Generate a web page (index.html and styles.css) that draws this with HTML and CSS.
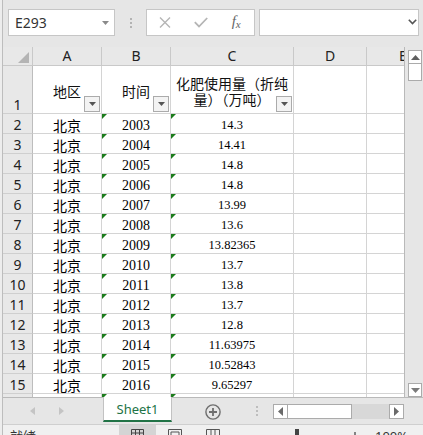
FILE: index.html
```html
<!DOCTYPE html>
<html>
<head>
    <title>Sheet1 - Excel</title>
    <link rel="stylesheet" href="styles.css">
</head>
<body>
    <div class="window">
        <div class="edge"></div>
        <div class="main">
            <div class="formula-bar">
                <div class="name-box">
                    <span>E293</span>
                    <svg width="7" height="4" viewBox="0 0 7 4"><path d="M0 0H7L3.5 4Z" fill="#8a8a8a"/></svg>
                </div>
                <div class="grip">
                    <svg width="2" height="10" viewBox="0 0 2 10"><rect y="0" width="2" height="2" fill="#b3b3b3"/><rect y="4" width="2" height="2" fill="#b3b3b3"/><rect y="8" width="2" height="2" fill="#b3b3b3"/></svg>
                </div>
                <div class="fx-buttons">
                    <span class="fx-btn">
                        <svg width="12" height="11" viewBox="0 0 12 11"><path d="M1 0.5L11 10.5M11 0.5L1 10.5" stroke="#b5b5b5" stroke-width="1.4" fill="none"/></svg>
                    </span>
                    <span class="fx-btn">
                        <svg width="14" height="11" viewBox="0 0 14 11"><path d="M0.8 5.2L5 9.5L13.2 1" stroke="#b5b5b5" stroke-width="1.8" fill="none"/></svg>
                    </span>
                    <span class="fx-btn fx"><i>f</i><i class="sub">x</i></span>
                </div>
                <div class="formula-input">
                    <svg width="9" height="6" viewBox="0 0 9 6"><path d="M0.8 0.8L4.5 4.6L8.2 0.8" stroke="#555" stroke-width="1.6" fill="none"/></svg>
                </div>
            </div>

            <div class="sheet-area">
                <div class="grid">
                    <div class="row head-row">
                        <div class="corner"><svg width="11" height="11" viewBox="0 0 11 11"><path d="M11 0V11H0Z" fill="#b4b4b4"/></svg></div>
                        <div class="col-head">A</div>
                        <div class="col-head">B</div>
                        <div class="col-head">C</div>
                        <div class="col-head">D</div>
                        <div class="col-head">E</div>
                    </div>
                    <div class="row title-row">
                        <div class="row-head">1</div>
                        <div class="cell title">地区<span class="filter"><svg width="7" height="4" viewBox="0 0 7 4"><path d="M0 0H7L3.5 4Z" fill="#555"/></svg></span></div>
                        <div class="cell title">时间<span class="filter"><svg width="7" height="4" viewBox="0 0 7 4"><path d="M0 0H7L3.5 4Z" fill="#555"/></svg></span></div>
                        <div class="cell title">化肥使用量（折纯<br>量）（万吨）<span class="filter"><svg width="7" height="4" viewBox="0 0 7 4"><path d="M0 0H7L3.5 4Z" fill="#555"/></svg></span></div>
                        <div class="cell"></div>
                        <div class="cell"></div>
                    </div>
                    <div class="row">
                        <div class="row-head">2</div>
                        <div class="cell cjk">北京</div>
                        <div class="cell num flag">2003</div>
                        <div class="cell num small flag">14.3</div>
                        <div class="cell"></div>
                        <div class="cell"></div>
                    </div>
                    <div class="row">
                        <div class="row-head">3</div>
                        <div class="cell cjk">北京</div>
                        <div class="cell num flag">2004</div>
                        <div class="cell num small flag">14.41</div>
                        <div class="cell"></div>
                        <div class="cell"></div>
                    </div>
                    <div class="row">
                        <div class="row-head">4</div>
                        <div class="cell cjk">北京</div>
                        <div class="cell num flag">2005</div>
                        <div class="cell num small flag">14.8</div>
                        <div class="cell"></div>
                        <div class="cell"></div>
                    </div>
                    <div class="row">
                        <div class="row-head">5</div>
                        <div class="cell cjk">北京</div>
                        <div class="cell num flag">2006</div>
                        <div class="cell num small flag">14.8</div>
                        <div class="cell"></div>
                        <div class="cell"></div>
                    </div>
                    <div class="row">
                        <div class="row-head">6</div>
                        <div class="cell cjk">北京</div>
                        <div class="cell num flag">2007</div>
                        <div class="cell num small flag">13.99</div>
                        <div class="cell"></div>
                        <div class="cell"></div>
                    </div>
                    <div class="row">
                        <div class="row-head">7</div>
                        <div class="cell cjk">北京</div>
                        <div class="cell num flag">2008</div>
                        <div class="cell num small flag">13.6</div>
                        <div class="cell"></div>
                        <div class="cell"></div>
                    </div>
                    <div class="row">
                        <div class="row-head">8</div>
                        <div class="cell cjk">北京</div>
                        <div class="cell num flag">2009</div>
                        <div class="cell num small flag">13.82365</div>
                        <div class="cell"></div>
                        <div class="cell"></div>
                    </div>
                    <div class="row">
                        <div class="row-head">9</div>
                        <div class="cell cjk">北京</div>
                        <div class="cell num flag">2010</div>
                        <div class="cell num small flag">13.7</div>
                        <div class="cell"></div>
                        <div class="cell"></div>
                    </div>
                    <div class="row">
                        <div class="row-head">10</div>
                        <div class="cell cjk">北京</div>
                        <div class="cell num flag">2011</div>
                        <div class="cell num small flag">13.8</div>
                        <div class="cell"></div>
                        <div class="cell"></div>
                    </div>
                    <div class="row">
                        <div class="row-head">11</div>
                        <div class="cell cjk">北京</div>
                        <div class="cell num flag">2012</div>
                        <div class="cell num small flag">13.7</div>
                        <div class="cell"></div>
                        <div class="cell"></div>
                    </div>
                    <div class="row">
                        <div class="row-head">12</div>
                        <div class="cell cjk">北京</div>
                        <div class="cell num flag">2013</div>
                        <div class="cell num small flag">12.8</div>
                        <div class="cell"></div>
                        <div class="cell"></div>
                    </div>
                    <div class="row">
                        <div class="row-head">13</div>
                        <div class="cell cjk">北京</div>
                        <div class="cell num flag">2014</div>
                        <div class="cell num small flag">11.63975</div>
                        <div class="cell"></div>
                        <div class="cell"></div>
                    </div>
                    <div class="row">
                        <div class="row-head">14</div>
                        <div class="cell cjk">北京</div>
                        <div class="cell num flag">2015</div>
                        <div class="cell num small flag">10.52843</div>
                        <div class="cell"></div>
                        <div class="cell"></div>
                    </div>
                    <div class="row">
                        <div class="row-head">15</div>
                        <div class="cell cjk">北京</div>
                        <div class="cell num flag">2016</div>
                        <div class="cell num small flag">9.65297</div>
                        <div class="cell"></div>
                        <div class="cell"></div>
                    </div>
                    <div class="row">
                        <div class="row-head"></div>
                        <div class="cell"></div>
                        <div class="cell flag"></div>
                        <div class="cell flag"></div>
                        <div class="cell"></div>
                        <div class="cell"></div>
                    </div>
                </div>

                <div class="vscroll">
                    <div class="sbtn">
                        <svg width="9" height="5" viewBox="0 0 9 5"><path d="M0 5H9L4.5 0Z" fill="#5f5f5f"/></svg>
                    </div>
                    <div class="vthumb"></div>
                    <div class="vtrack"></div>
                    <div class="sbtn">
                        <svg width="9" height="5" viewBox="0 0 9 5"><path d="M0 0H9L4.5 5Z" fill="#7a7a7a"/></svg>
                    </div>
                </div>
            </div>

            <div class="tab-bar">
                <div class="tab-nav">
                    <svg width="5" height="8" viewBox="0 0 5 8"><path d="M5 0V8L0 4Z" fill="#c4c4c4"/></svg>
                    <svg width="5" height="8" viewBox="0 0 5 8"><path d="M0 0V8L5 4Z" fill="#c4c4c4"/></svg>
                </div>
                <div class="sheet-tab">Sheet1</div>
                <div class="tab-add">
                    <svg width="16" height="16" viewBox="0 0 16 16"><circle cx="8" cy="8" r="7.1" stroke="#6e6e6e" stroke-width="1.4" fill="none"/><path d="M4 8H12M8 4V12" stroke="#6e6e6e" stroke-width="1.8"/></svg>
                </div>
                <div class="tab-grip">
                    <svg width="2" height="10" viewBox="0 0 2 10"><rect y="0" width="2" height="2" fill="#bdbdbd"/><rect y="4" width="2" height="2" fill="#bdbdbd"/><rect y="8" width="2" height="2" fill="#bdbdbd"/></svg>
                </div>
                <div class="hscroll">
                    <div class="hbtn">
                        <svg width="5" height="9" viewBox="0 0 5 9"><path d="M5 0V9L0 4.5Z" fill="#6a6a6a"/></svg>
                    </div>
                    <div class="hthumb"></div>
                    <div class="htrack"></div>
                    <div class="hbtn">
                        <svg width="5" height="9" viewBox="0 0 5 9"><path d="M0 0V9L5 4.5Z" fill="#6a6a6a"/></svg>
                    </div>
                </div>
            </div>

            <div class="status-bar">
                <div class="status-text">就绪</div>
                <div class="views">
                    <div class="view active">
                        <svg width="13" height="12" viewBox="0 0 13 12"><path d="M0.5 0.5H12.5V11.5H0.5ZM0.5 4H12.5M0.5 8H12.5M4.5 0.5V11.5M8.5 0.5V11.5" stroke="#444" fill="none"/></svg>
                    </div>
                    <div class="view">
                        <svg width="14" height="12" viewBox="0 0 14 12"><path d="M0.5 0.5H13.5V11.5H0.5ZM3 3H11V11.5H3Z" stroke="#555" fill="none"/></svg>
                    </div>
                    <div class="view">
                        <svg width="14" height="12" viewBox="0 0 14 12"><path d="M0.5 0.5H13.5V11.5H0.5ZM5 0.5V11.5M9 0.5V11.5" stroke="#555" fill="none"/></svg>
                    </div>
                </div>
                <svg class="zoom-slider" width="120" height="20" viewBox="0 0 120 20"><path d="M2 12H10M14 12H108" stroke="#777" stroke-width="1"/><rect x="55" y="4" width="4" height="16" fill="#444"/><path d="M111 12H119M115 7V17" stroke="#555" stroke-width="1.4"/></svg>
                <div class="zoom-value">100%</div>
            </div>
        </div>
    </div>
</body>
</html>
```

FILE: styles.css
```css
* {
    box-sizing: border-box;
}
body {
    margin: 0;
    width: 423px;
    height: 435px;
    overflow: hidden;
    background: #e6e6e6;
    font-family: "Noto Sans", "Noto Sans CJK SC", sans-serif;
    color: #222;
}
.window {
    display: flex;
    height: 435px;
}
.edge {
    width: 3px;
    flex: none;
    background: #ededed;
    border-right: 1px solid #bdbdbd;
}
.main {
    width: 420px;
    flex: none;
    display: flex;
    flex-direction: column;
}

/* formula bar */
.formula-bar {
    height: 47px;
    flex: none;
    display: flex;
    align-items: flex-start;
    padding-top: 9px;
}
.name-box {
    margin-left: 5px;
    width: 107px;
    height: 27px;
    background: #fff;
    border: 1px solid #c6c6c6;
    display: flex;
    align-items: center;
    justify-content: space-between;
    padding: 0 5px 0 6px;
    font-size: 14px;
    line-height: 25px;
    color: #333;
}
.grip {
    width: 31px;
    height: 27px;
    display: flex;
    align-items: center;
    justify-content: center;
}
.fx-buttons {
    width: 109px;
    height: 27px;
    background: #fff;
    border: 1px solid #c6c6c6;
    display: flex;
}
.fx-btn {
    flex: 1;
    display: flex;
    align-items: center;
    justify-content: center;
}
.fx {
    font-family: "Liberation Serif", serif;
    font-size: 15px;
    color: #666;
    padding-bottom: 2px;
}
.fx .sub {
    font-size: 11px;
    margin-top: 5px;
}
.formula-input {
    margin-left: 4px;
    width: 160px;
    height: 27px;
    background: #fff;
    border: 1px solid #c6c6c6;
    display: flex;
    align-items: center;
    justify-content: flex-end;
    padding: 0 1px 1px 0;
}

/* sheet */
.sheet-area {
    height: 350px;
    flex: none;
    display: flex;
}
.grid {
    width: 402px;
    overflow: hidden;
    background: #fff;
    border-right: 1px solid #b9b9b9;
}
.row {
    display: grid;
    grid-template-columns: 30px 69px 69px 123px 73px 73px;
    height: 20px;
}
.head-row {
    height: 19px;
}
.title-row {
    height: 48px;
}
.row > div {
    position: relative;
    border-right: 1px solid #d4d4d4;
    border-bottom: 1px solid #d4d4d4;
}
.corner,
.col-head,
.row-head {
    background: #e8e8e8;
}
.row > .corner,
.row > .col-head {
    border-color: #c9c9c9;
}
.row > .row-head {
    border-bottom-color: #cfcfcf;
    border-right-color: #bdbdbd;
}
.corner {
    display: flex;
    align-items: flex-end;
    justify-content: flex-end;
    padding: 0 3px 2px 0;
}
.col-head {
    display: flex;
    align-items: center;
    justify-content: center;
    font-size: 14px;
    line-height: 18px;
}
.row-head {
    display: flex;
    align-items: flex-end;
    justify-content: center;
    font-size: 14px;
    line-height: 16px;
}
.cell {
    display: flex;
    align-items: flex-end;
    justify-content: center;
    font-size: 14px;
    line-height: 15px;
    color: #000;
    white-space: nowrap;
}
.cjk {
    font-family: "Noto Sans CJK SC", sans-serif;
}
.num {
    font-family: "Liberation Serif", serif;
}
.small {
    font-size: 12.5px;
}
.title {
    align-items: center;
    padding-top: 2px;
    line-height: 16px;
    text-align: center;
    font-family: "Noto Sans CJK SC", sans-serif;
    color: #111;
}
.flag::before {
    content: "";
    position: absolute;
    top: 0;
    left: 0;
    border-top: 5px solid #1c7c1c;
    border-right: 5px solid transparent;
}
.filter {
    position: absolute;
    right: 1px;
    bottom: 1px;
    width: 16px;
    height: 16px;
    background: #f3f3f3;
    border: 1px solid #ababab;
    display: flex;
    align-items: center;
    justify-content: center;
}

/* scrollbars */
.vscroll {
    width: 18px;
    flex: none;
    display: flex;
    flex-direction: column;
    padding: 3px 1px 0 3px;
}
.sbtn {
    height: 14px;
    background: #fff;
    border: 1px solid #ababab;
    display: flex;
    align-items: center;
    justify-content: center;
}
.vthumb {
    height: 18px;
    margin-top: -1px;
    background: #fff;
    border: 1px solid #ababab;
}
.vtrack {
    flex: 1;
}
.hscroll {
    margin-left: 15px;
    width: 131px;
    height: 15px;
    display: flex;
}
.hbtn {
    width: 15px;
    background: #fff;
    border: 1px solid #ababab;
    display: flex;
    align-items: center;
    justify-content: center;
}
.hthumb {
    width: 65px;
    margin-left: -1px;
    background: #fff;
    border: 1px solid #ababab;
}
.htrack {
    flex: 1;
    background: #d8d8d8;
}

/* sheet tabs */
.tab-bar {
    height: 27px;
    flex: none;
    border-top: 1px solid #b9b9b9;
    display: flex;
    align-items: center;
}
.tab-nav {
    width: 100px;
    display: flex;
    gap: 24px;
    padding-left: 27px;
}
.sheet-tab {
    width: 69px;
    height: 25px;
    align-self: flex-start;
    margin-top: -1px;
    background: #fff;
    border-left: 1px solid #c2c2c2;
    border-right: 1px solid #c2c2c2;
    border-bottom: 2px solid #217346;
    color: #217346;
    font-size: 13px;
    display: flex;
    align-items: center;
    justify-content: center;
    padding-top: 1px;
}
.tab-add {
    margin-left: 33px;
    margin-top: 2px;
    display: flex;
}
.tab-grip {
    margin-left: 35px;
    display: flex;
}

/* status bar */
.status-bar {
    flex: 1;
    border-top: 1px solid #cfcfcf;
    background: #f0f0f0;
    display: flex;
    align-items: flex-start;
    font-size: 13px;
    line-height: 16px;
}
.status-text {
    width: 116px;
    padding: 3px 0 0 7px;
    font-family: "Noto Sans CJK SC", sans-serif;
    color: #333;
}
.views {
    display: flex;
}
.view {
    width: 38px;
    height: 22px;
    display: flex;
    justify-content: center;
    padding-top: 4px;
}
.view.active {
    width: 37px;
    background: #d4d4d4;
}
.zoom-slider {
    margin-left: 8px;
}
.zoom-value {
    margin-left: 15px;
    padding-top: 3px;
    color: #333;
}
```
